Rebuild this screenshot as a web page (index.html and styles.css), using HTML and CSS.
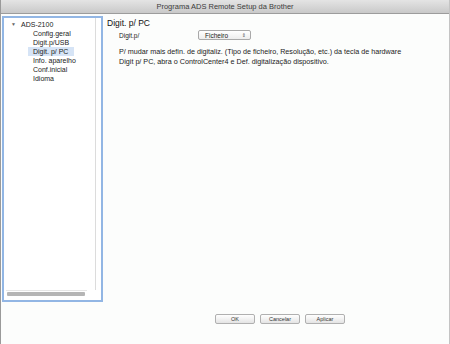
FILE: index.html
```html
<!DOCTYPE html>
<html lang="pt">
<head>
    <meta charset="UTF-8">
    <title>Programa ADS Remote Setup da Brother</title>
    <link rel="stylesheet" href="styles.css">
</head>
<body>
    <div class="window">
        <div class="titlebar">Programa ADS Remote Setup da Brother</div>

        <div class="content">
            <div class="sidebar">
                <div class="tree">
                    <div class="tree-root"><span class="arrow">&#9660;</span>ADS-2100</div>
                    <div class="tree-item">Config.geral</div>
                    <div class="tree-item">Digit.p/USB</div>
                    <div class="tree-item selected">Digit. p/ PC</div>
                    <div class="tree-item">Info. aparelho</div>
                    <div class="tree-item">Conf.inicial</div>
                    <div class="tree-item">Idioma</div>
                </div>
                <div class="hscroll"><div class="hthumb"></div></div>
            </div>

            <div class="panel">
                <h2>Digit. p/ PC</h2>
                <div class="field-row">
                    <span class="field-label">Digit.p/</span>
                    <div class="select">Ficheiro<span class="updown">&#8661;</span></div>
                </div>
                <p class="note">P/ mudar mais defin. de digitaliz. (Tipo de ficheiro, Resolução, etc.) da tecla de hardware<br>Digit p/ PC, abra o ControlCenter4 e Def. digitalização dispositivo.</p>
            </div>
        </div>

        <div class="buttons">
            <button class="btn">OK</button>
            <button class="btn">Cancelar</button>
            <button class="btn">Aplicar</button>
        </div>

        <div class="grip">
            <svg width="7" height="7" viewBox="0 0 7 7">
                <path d="M1 7 L7 1 M4 7 L7 4" stroke="#a8a8a8" stroke-width="0.8"/>
            </svg>
        </div>
    </div>
</body>
</html>
```

FILE: styles.css
```css
* {
    margin: 0;
    padding: 0;
    box-sizing: border-box;
    font-family: 'Liberation Sans', 'DejaVu Sans', sans-serif;
}

body {
    width: 450px;
    height: 344px;
    background: #fcfdfc;
    overflow: hidden;
}

.window {
    position: relative;
    width: 450px;
    height: 344px;
    display: flex;
    flex-direction: column;
    border-left: 1px solid #9a9a9a;
    border-right: 1px solid #c4c4c4;
    background: #fcfdfc;
}

.titlebar {
    height: 14px;
    background: linear-gradient(#e4e4e4, #c9c9c9);
    border-bottom: 1px solid #9c9c9c;
    text-align: center;
    font-size: 7.5px;
    line-height: 13px;
    color: #3c3c3c;
}

.content {
    display: flex;
    height: 288px;
    padding-top: 2px;
}

.sidebar {
    position: relative;
    width: 101px;
    margin-left: 1px;
    height: 286px;
    border: 2px solid #92b6e4;
    background: #ffffff;
    display: flex;
    flex-direction: column;
}

.tree {
    flex: 1;
    padding-top: 2px;
    margin-right: 5px;
    border-right: 1px solid #dcdcdc;
    font-size: 7px;
    color: #222;
}

.tree-root {
    height: 9px;
    line-height: 9px;
    padding-left: 7px;
}

.arrow {
    display: inline-block;
    width: 10px;
    font-size: 5px;
    color: #666;
    vertical-align: top;
}

.tree-item {
    height: 9px;
    line-height: 9px;
    margin-left: 24px;
    padding-left: 5px;
    white-space: nowrap;
}

.tree-item.selected {
    width: 46px;
    background: #d6e4f6;
}

.hscroll {
    height: 7px;
    margin: 0 14px 3px 2px;
    border-top: 1px solid #e6e6e6;
    padding-top: 1px;
}

.hthumb {
    height: 4px;
    width: 78px;
    margin-left: 1px;
    background: #b5b5b5;
    border-radius: 1px;
}

.panel {
    flex: 1;
    padding: 2px 0 0 4px;
    color: #222;
}

h2 {
    font-size: 8.5px;
    font-weight: normal;
    color: #111;
    line-height: 11px;
}

.field-row {
    display: flex;
    align-items: center;
    margin: 1px 0 0 12px;
    font-size: 6.5px;
}

.field-label {
    width: 79px;
}

.select {
    width: 53px;
    height: 10px;
    line-height: 9px;
    padding-left: 6px;
    border: 1px solid #a9a9a9;
    border-radius: 2px;
    background: linear-gradient(#ffffff, #ededed);
    display: flex;
    justify-content: space-between;
    font-size: 6.5px;
}

.updown {
    font-size: 5px;
    padding-right: 4px;
    color: #555;
}

.note {
    margin: 7px 0 0 12px;
    font-size: 7.2px;
    line-height: 10px;
    color: #222;
    white-space: nowrap;
}

.buttons {
    display: flex;
    gap: 5px;
    margin: 12px 0 0 214px;
}

.btn {
    width: 40px;
    height: 10px;
    border: 1px solid #b0b0b0;
    border-radius: 2px;
    background: linear-gradient(#ffffff, #e4e4e4);
    font-size: 5.5px;
    color: #333;
    line-height: 8px;
}

.grip {
    position: absolute;
    right: 1px;
    bottom: 1px;
    width: 7px;
    height: 7px;
}
```
